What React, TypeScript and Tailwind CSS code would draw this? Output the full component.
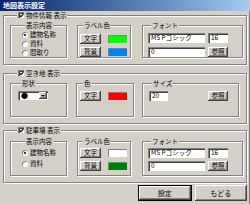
import type { ReactNode } from "react";

const etched = "border border-[#808080] shadow-[inset_1px_1px_0_#fff,1px_1px_0_#fff]";
const raised = "bg-[#d4d0c8] shadow-[inset_-1px_-1px_0_#404040,inset_1px_1px_0_#fff,inset_-2px_-2px_0_#808080]";
const sunken = "bg-white shadow-[inset_1px_1px_0_#808080,inset_2px_2px_0_#404040]";

function CheckBox() {
    return (
        <span className={`flex h-[6px] w-[6px] items-center justify-center ${sunken}`}>
            <svg width="5" height="5" viewBox="0 0 7 7">
                <path d="M1 3.2l1.8 1.8L6 1.5" stroke="#000" strokeWidth="1.6" fill="none" />
            </svg>
        </span>
    );
}

function Radio({ on }: { on?: boolean }) {
    return (
        <span className="flex h-[6px] w-[6px] items-center justify-center rounded-full bg-white shadow-[inset_1px_1px_0_#808080]">
            {on && <span className="h-[2px] w-[2px] rounded-full bg-black" />}
        </span>
    );
}

function Btn({ children, className = "" }: { children?: ReactNode; className?: string }) {
    return <div className={`flex items-center justify-center ${raised} ${className}`}>{children}</div>;
}

function Input({ value, className = "" }: { value: string; className?: string }) {
    return <div className={`flex h-[10px] items-center pl-[3px] ${sunken} ${className}`}>{value}</div>;
}

function Swatch({ className }: { className: string }) {
    return <div className={`h-[8px] w-[19px] shadow-[inset_1px_1px_0_#808080] ${className}`} />;
}

function Group({ title, className = "", children }: { title: string; className?: string; children: ReactNode }) {
    return (
        <fieldset className={`${etched} ${className}`}>
            <legend className="ml-[3px] bg-[#d4d0c8] px-[1px] leading-[8px]">{title}</legend>
            {children}
        </fieldset>
    );
}

function Section({ label, className = "", children }: { label: string; className?: string; children: ReactNode }) {
    return (
        <fieldset className={`w-[244px] pl-[6px] pb-[6px] ${etched} ${className}`}>
            <legend className="ml-[7px] bg-[#d4d0c8] px-[1px] leading-[8px]">
                <span className="flex items-center gap-[2px]">
                    <CheckBox />
                    <span>{label}</span>
                </span>
            </legend>
            <div className="flex">{children}</div>
        </fieldset>
    );
}

function RadioRow({ label, on, h }: { label: string; on?: boolean; h: string }) {
    return (
        <div className={`flex items-center gap-[2px] ${h}`}>
            <Radio on={on} />
            <span>{label}</span>
        </div>
    );
}

function ColorRow({ label, swatch }: { label: string; swatch: string }) {
    return (
        <div className="flex h-[10px] items-center gap-[7px]">
            <Btn className="h-[10px] w-[21px]">{label}</Btn>
            <Swatch className={swatch} />
        </div>
    );
}

function FontRows() {
    return (
        <>
            <div className="flex gap-[3px]">
                <Input value="MS Pゴシック" className="w-[57px]" />
                <Input value="16" className="w-[20px]" />
            </div>
            <div className="flex gap-[3px]">
                <Input value="0" className="w-[57px]" />
                <Btn className="h-[10px] w-[20px]">参照</Btn>
            </div>
        </>
    );
}

export default function App() {
    return (
        <div className="flex h-[204px] w-[250px] flex-col overflow-hidden bg-[#d4d0c8] font-['Noto_Sans_CJK_JP',sans-serif] text-[6.5px] text-black shadow-[inset_-1px_0_0_#808080]">
            {/* Title bar */}
            <div className="flex h-[11px] items-center bg-gradient-to-r from-[#0a246a] to-[#a6caf0] px-[3px] text-[7px] font-bold text-white">
                地図表示設定
            </div>

            <div className="flex flex-col px-[3px]">
                {/* 物件情報 */}
                <Section label="物件情報 表示" className="pt-[2px]">
                    <Group title="表示内容" className="w-[57px] pl-[11px] pt-[1px]">
                        <RadioRow label="建物名称" on h="h-[9px]" />
                        <RadioRow label="資料" h="h-[9px]" />
                        <RadioRow label="間取り" h="h-[9px]" />
                    </Group>
                    <Group title="ラベル色" className="ml-[10px] flex w-[54px] flex-col gap-[3px] pl-[2px] pt-[5px]">
                        <ColorRow label="文字" swatch="bg-[#00ff00]" />
                        <ColorRow label="背景" swatch="bg-[#0080ff]" />
                    </Group>
                    <Group title="フォント" className="ml-[11px] flex w-[101px] flex-col gap-[4px] pl-[5px] pt-[4px]">
                        <FontRows />
                    </Group>
                </Section>

                {/* 空き地 */}
                <Section label="空き地 表示" className="mt-[4px] pt-[2px]">
                    <Group title="形状" className="w-[57px] pl-[7px] pt-[4px] pb-[16px]">
                        <div className={`flex h-[9px] w-[30px] items-center ${sunken}`}>
                            <span className="ml-[3px] text-[7px] leading-none">●</span>
                            <Btn className="ml-auto mr-[1px] h-[7px] w-[8px]">
                                <svg width="4" height="2" viewBox="0 0 4 2">
                                    <path d="M0 0h4L2 2z" fill="#000" />
                                </svg>
                            </Btn>
                        </div>
                    </Group>
                    <Group title="色" className="ml-[9px] w-[58px] pl-[3px] pt-[4px]">
                        <ColorRow label="文字" swatch="bg-[#ff0000]" />
                    </Group>
                    <Group title="サイズ" className="ml-[8px] flex w-[97px] items-start pl-[6px] pr-[10px] pt-[4px]">
                        <Input value="20" className="w-[19px]" />
                        <Btn className="ml-auto h-[10px] w-[20px]">参照</Btn>
                    </Group>
                </Section>

                {/* 駐車場 */}
                <Section label="駐車場 表示" className="mt-[2px] pt-[3px]">
                    <Group title="表示内容" className="w-[57px] pl-[11px] pt-[2px]">
                        <RadioRow label="建物名称" on h="h-[11px]" />
                        <RadioRow label="資料" h="h-[11px]" />
                    </Group>
                    <Group title="ラベル色" className="ml-[10px] flex w-[54px] flex-col gap-[3px] pl-[2px] pt-[3px] pb-[4px]">
                        <ColorRow label="文字" swatch="bg-white" />
                        <ColorRow label="背景" swatch="bg-[#008000]" />
                    </Group>
                    <Group title="フォント" className="ml-[11px] flex w-[101px] flex-col gap-[3px] pl-[5px] pt-[3px]">
                        <FontRows />
                    </Group>
                </Section>

                {/* Buttons */}
                <div className="mt-[2px] flex gap-[3px] pl-[135px] text-[7px]">
                    <Btn className="h-[16px] w-[54px] border border-black">設定</Btn>
                    <Btn className="h-[16px] w-[53px]">もどる</Btn>
                </div>
            </div>
        </div>
    );
}
